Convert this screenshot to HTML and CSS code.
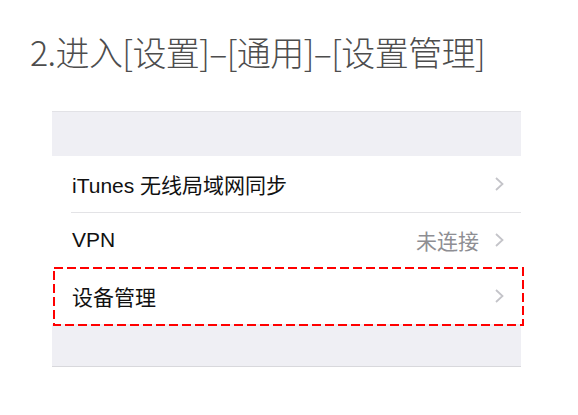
FILE: index.html
```html
<!DOCTYPE html>
<html lang="zh-CN">
<head>
<meta charset="utf-8">
<link rel="stylesheet" href="styles.css">
</head>
<body>
<h1 class="title">2.进入[设置]–[通用]–[设置管理]</h1>
<div class="panel">
  <div class="group">
    <div class="row">
      <div class="row-inner sep">
        <span class="label">iTunes 无线局域网同步</span>
        <span class="right"><svg class="chev" width="9" height="14" viewBox="0 0 9 14"><path d="M1 1 L7.5 7 L1 13" fill="none" stroke="#c4c4c9" stroke-width="1.8"/></svg></span>
      </div>
    </div>
    <div class="row">
      <div class="row-inner">
        <span class="label">VPN</span>
        <span class="right"><span class="value">未连接</span><svg class="chev" width="9" height="14" viewBox="0 0 9 14"><path d="M1 1 L7.5 7 L1 13" fill="none" stroke="#c4c4c9" stroke-width="1.8"/></svg></span>
      </div>
    </div>
    <div class="row highlight">
      <div class="row-inner">
        <span class="label">设备管理</span>
        <span class="right"><svg class="chev" width="9" height="14" viewBox="0 0 9 14"><path d="M1 1 L7.5 7 L1 13" fill="none" stroke="#c4c4c9" stroke-width="1.8"/></svg></span>
      </div>
      <svg class="dash" width="471" height="60" viewBox="0 0 471 60"><rect x="1" y="1" width="469" height="57" fill="none" stroke="#ff0000" stroke-width="2" stroke-dasharray="9 4"/></svg>
    </div>
  </div>
</div>
</body>
</html>
```

FILE: styles.css
```css
html, body {
  margin: 0;
  padding: 0;
  background: #ffffff;
}
body {
  font-family: "Noto Sans CJK SC", "Noto Sans", sans-serif;
}
.title {
  margin: 0;
  padding: 27px 0 0 30px;
  height: 85px;
  box-sizing: border-box;
  font-size: 34px;
  font-weight: 300;
  line-height: 49px;
  color: #4d4d4d;
  letter-spacing: -0.6px;
  white-space: nowrap;
}
.panel {
  margin-left: 52px;
  margin-top: 26px;
  width: 469px;
  background: #efeff4;
  border-top: 1px solid #e2e2e6;
  border-bottom: 1px solid #d8d8dc;
  padding: 44px 0 42px;
}
.group {
  background: #ffffff;
}
.row {
  position: relative;
  height: 56px;
  padding-left: 19px;
}
.row-inner {
  height: 100%;
  display: flex;
  align-items: center;
  justify-content: space-between;
  padding-right: 17px;
  box-sizing: border-box;
}
.sep {
  border-bottom: 1px solid #e3e3e6;
  height: 57px;
}
.label {
  font-family: "Liberation Sans", "Noto Sans CJK SC", sans-serif;
  font-size: 21px;
  color: #111111;
  padding-left: 1px;
}
.right {
  display: flex;
  align-items: center;
  gap: 16px;
}
.value {
  font-size: 21px;
  color: #8e8e93;
}
.chev {
  display: block;
}
.dash {
  position: absolute;
  left: 1px;
  top: -1px;
}
```
